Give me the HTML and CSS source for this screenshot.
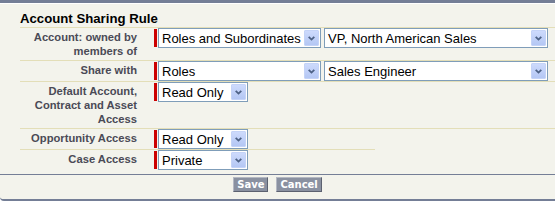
FILE: index.html
```html
<!DOCTYPE html>
<html lang="en">
<head>
    <meta charset="UTF-8">
    <title>Account Sharing Rule</title>
    <link rel="stylesheet" href="styles.css">
</head>
<body>
    <div class="block">
        <div class="block-head">
            <h2>Account Sharing Rule</h2>
        </div>

        <div class="block-body">
            <div class="row">
                <div class="label">Account: owned by members of</div>
                <div class="data">
                    <div class="select wide required">
                        <span class="value">Roles and Subordinates</span>
                        <span class="arrow"><svg width="7" height="5" viewBox="0 0 7 5"><path d="M0.7 0.8 L3.5 3.6 L6.3 0.8" fill="none" stroke="#4d6185" stroke-width="1.8"/></svg></span>
                    </div>
                    <div class="select long">
                        <span class="value">VP, North American Sales</span>
                        <span class="arrow"><svg width="7" height="5" viewBox="0 0 7 5"><path d="M0.7 0.8 L3.5 3.6 L6.3 0.8" fill="none" stroke="#4d6185" stroke-width="1.8"/></svg></span>
                    </div>
                </div>
            </div>

            <div class="row">
                <div class="label">Share with</div>
                <div class="data">
                    <div class="select wide required">
                        <span class="value">Roles</span>
                        <span class="arrow"><svg width="7" height="5" viewBox="0 0 7 5"><path d="M0.7 0.8 L3.5 3.6 L6.3 0.8" fill="none" stroke="#4d6185" stroke-width="1.8"/></svg></span>
                    </div>
                    <div class="select long">
                        <span class="value">Sales Engineer</span>
                        <span class="arrow"><svg width="7" height="5" viewBox="0 0 7 5"><path d="M0.7 0.8 L3.5 3.6 L6.3 0.8" fill="none" stroke="#4d6185" stroke-width="1.8"/></svg></span>
                    </div>
                </div>
            </div>

            <div class="row">
                <div class="label">Default Account, Contract and Asset Access</div>
                <div class="data">
                    <div class="select short required">
                        <span class="value">Read Only</span>
                        <span class="arrow"><svg width="7" height="5" viewBox="0 0 7 5"><path d="M0.7 0.8 L3.5 3.6 L6.3 0.8" fill="none" stroke="#4d6185" stroke-width="1.8"/></svg></span>
                    </div>
                </div>
            </div>

            <div class="row half">
                <div class="label">Opportunity Access</div>
                <div class="data">
                    <div class="select short required">
                        <span class="value">Read Only</span>
                        <span class="arrow"><svg width="7" height="5" viewBox="0 0 7 5"><path d="M0.7 0.8 L3.5 3.6 L6.3 0.8" fill="none" stroke="#4d6185" stroke-width="1.8"/></svg></span>
                    </div>
                </div>
            </div>

            <div class="row last">
                <div class="label">Case Access</div>
                <div class="data">
                    <div class="select short required">
                        <span class="value">Private</span>
                        <span class="arrow"><svg width="7" height="5" viewBox="0 0 7 5"><path d="M0.7 0.8 L3.5 3.6 L6.3 0.8" fill="none" stroke="#4d6185" stroke-width="1.8"/></svg></span>
                    </div>
                </div>
            </div>
        </div>

        <div class="buttons">
            <button class="btn">Save</button>
            <button class="btn">Cancel</button>
        </div>
    </div>
</body>
</html>
```

FILE: styles.css
```css
body {
    margin: 0;
    background: #fff;
    font-family: "Liberation Sans", Arial, sans-serif;
}
.block {
    background: #f3f3ec;
    border-top: 3px solid #747e96;
    border-bottom: 2px solid #747e96;
    border-bottom-left-radius: 4px;
}
.block-head {
    border-top: 1px solid #fff;
    padding: 7px 0 0 20px;
}
.block-head h2 {
    margin: 0;
    font-size: 13.2px;
    line-height: 16px;
    color: #000;
    border-bottom: 1px solid #e3deb8;
}
.block-body {
    padding: 0 0 4px 20px;
}
.row {
    display: flex;
    border-bottom: 1px solid #e3deb8;
}
.row.half {
    width: 355px;
}
.row.last {
    border-bottom: none;
}
.label {
    box-sizing: border-box;
    width: 127px;
    flex-shrink: 0;
    padding: 2px 10px 2px 2px;
    text-align: right;
    font-size: 11.2px;
    line-height: 14px;
    font-weight: bold;
    color: #4a4a56;
}
.data {
    display: flex;
    gap: 3px;
    padding-left: 11px;
}
.select {
    position: relative;
    box-sizing: border-box;
    display: flex;
    height: 20px;
    border: 1px solid #7f9db9;
    background: #fff;
    font-size: 13px;
    color: #000;
}
.select.wide {
    width: 163px;
}
.select.long {
    width: 224px;
}
.select.short {
    width: 90px;
}
.required::before {
    content: "";
    position: absolute;
    left: -5px;
    top: 0;
    bottom: 0;
    width: 3px;
    background: #c00;
}
.value {
    flex: 1;
    padding: 1px 0 0 3px;
    line-height: 17px;
    white-space: nowrap;
    overflow: hidden;
}
.arrow {
    box-sizing: border-box;
    display: flex;
    align-items: center;
    justify-content: center;
    width: 15px;
    height: 16px;
    margin: 1px 1px 0 0;
    border: 1px solid #c4d3f7;
    border-radius: 1px;
    background: linear-gradient(#cddafc, #b4c7f4);
}
.buttons {
    display: flex;
    justify-content: center;
    gap: 8px;
    border-top: 1px solid #747e96;
    padding: 2px 0 7px;
}
.btn {
    box-sizing: border-box;
    height: 15px;
    padding: 0 3px;
    margin: 0;
    font-family: "DejaVu Sans", Verdana, sans-serif;
    font-size: 10px;
    font-weight: bold;
    line-height: 12px;
    color: #fff;
    background: #8a91a1;
    border: 1px solid;
    border-color: #b4b8c3 #5c6170 #5c6170 #b4b8c3;
}
```
